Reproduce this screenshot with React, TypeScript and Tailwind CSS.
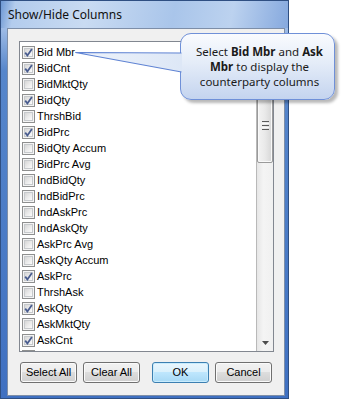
import React from "react";

const ITEMS: [string, boolean][] = [
  ["Bid Mbr", true],
  ["BidCnt", true],
  ["BidMktQty", false],
  ["BidQty", true],
  ["ThrshBid", false],
  ["BidPrc", true],
  ["BidQty Accum", false],
  ["BidPrc Avg", false],
  ["IndBidQty", false],
  ["IndBidPrc", false],
  ["IndAskPrc", false],
  ["IndAskQty", false],
  ["AskPrc Avg", false],
  ["AskQty Accum", false],
  ["AskPrc", true],
  ["ThrshAsk", false],
  ["AskQty", true],
  ["AskMktQty", false],
  ["AskCnt", true],
  ["", false],
];

function CheckBox({ checked }: { checked: boolean }) {
  return (
    <div className="relative w-[13px] h-[13px] shrink-0 border border-[#8e8f8f] bg-[#f4f4f4] p-[1px]">
      <div className="w-full h-full border border-[#c6c9cc] bg-[linear-gradient(135deg,#d6d6d6_0%,#eeeeee_60%,#fbfbfb_100%)]" />
      {checked && (
        <svg className="absolute left-0 top-0" width="11" height="11" viewBox="0 0 11 11">
          <path d="M2.2 5.6 L4.4 8.4 L8.9 1.9" fill="none" stroke="#4a5d8f" strokeWidth="1.8" strokeLinejoin="miter" />
        </svg>
      )}
    </div>
  );
}

const BTN =
  "block shrink-0 w-[57px] h-[21px] p-0 rounded-[3px] text-[11px] leading-[19px] text-black text-center whitespace-nowrap";

function WinButton({ label, primary, className = "" }: { label: string; primary?: boolean; className?: string }) {
  return (
    <button
      className={
        BTN +
        " " +
        (primary
          ? "border border-[#3c7fb1] bg-[linear-gradient(180deg,#eaf6fd_0%,#d9f0fc_50%,#bee6fd_50%,#a7d9f5_100%)] shadow-[inset_0_0_0_1px_#c9ecfd]"
          : "border border-[#707070] bg-[linear-gradient(180deg,#f2f2f2_0%,#ebebeb_50%,#dddddd_50%,#cfcfcf_100%)] shadow-[inset_0_0_0_1px_#fafafa]") +
        " " +
        className
      }
      style={{ fontFamily: '"Liberation Sans", Arial, sans-serif' }}
    >
      {label}
    </button>
  );
}

function ScrollBar() {
  return (
    <div className="w-[17px] h-full flex flex-col border-l border-[#b9b9b9] bg-[linear-gradient(90deg,#e6e6e6_0%,#f4f4f4_40%,#f0f0f0_100%)]">
      <div className="h-[17px] shrink-0" />
      <div className="h-[28px] shrink-0" />
      <div className="h-[76px] shrink-0 rounded-[2px] border border-[#9a9a9a] bg-[linear-gradient(90deg,#f3f3f3_0%,#e9e9e9_50%,#d6d6d6_100%)] shadow-[inset_0_0_0_1px_#f9f9f9] flex flex-col items-center justify-center gap-[1px]">
        <div className="w-[7px] h-[1px] bg-[#5a5a5a]" />
        <div className="w-[7px] h-[1px] bg-[#f8f8f8]" />
        <div className="w-[7px] h-[1px] bg-[#5a5a5a]" />
        <div className="w-[7px] h-[1px] bg-[#f8f8f8]" />
        <div className="w-[7px] h-[1px] bg-[#5a5a5a]" />
      </div>
      <div className="flex-1" />
      <div className="h-[17px] shrink-0 flex items-center justify-center">
        <svg width="7" height="4" viewBox="0 0 7 4">
          <path d="M0 0 H7 L3.5 4 Z" fill="#4d4d4d" />
        </svg>
      </div>
    </div>
  );
}

function Callout() {
  return (
    <>
      <div
        className="absolute left-[180px] top-[33px] w-[155px] h-[67px] rounded-[11px] border border-[#6f90d8] bg-[linear-gradient(180deg,#f9fbfe_0%,#e4ecf8_45%,#c4d4ef_100%)] shadow-[3px_3px_3px_rgba(0,0,0,0.28)] flex flex-col items-center justify-center text-[11.5px] leading-[15px] text-[#1a1a1a] pl-[4px]"
        style={{ fontFamily: '"Noto Sans", "Open Sans", sans-serif' }}
      >
        <div>
          Select <b>Bid Mbr</b> and <b>Ask</b>
        </div>
        <div>
          <b>Mbr</b> to display the
        </div>
        <div>counterparty columns</div>
      </div>
      <svg className="absolute left-0 top-0" width="200" height="90" viewBox="0 0 200 90">
        <defs>
          <linearGradient id="ptr" x1="0" y1="0" x2="1" y2="0">
            <stop offset="0" stopColor="#eef3fb" />
            <stop offset="1" stopColor="#dde7f6" />
          </linearGradient>
        </defs>
        <polygon points="75.5,52.5 182,53 182,72" fill="url(#ptr)" />
        <polyline points="181.5,53 75.5,52.5 181.5,72" fill="none" stroke="#5f83d3" strokeWidth="1.2" />
      </svg>
    </>
  );
}

export default function App() {
  return (
    <div className="relative w-[348px] h-[399px] bg-white overflow-hidden">
      <div className="w-[289px] h-[399px] flex flex-col border border-[#2f4f82] bg-[linear-gradient(180deg,#b5cdee_0px,#9dbbe6_28px,#5686cb_70px,#3f70c1_100%)]">
        <div className="h-[27px] shrink-0 flex items-center pl-[7px] bg-[linear-gradient(100deg,#6d98d4_0%,#b3cced_5%,#c9dbf2_30%,#a9c5ea_60%,#bcd2ef_80%,#86a9de_100%)]">
          <span
            className="text-[12px] text-[#111] mt-[1px]"
            style={{ fontFamily: '"Noto Sans", "Open Sans", sans-serif' }}
          >
            Show/Hide Columns
          </span>
        </div>
        <div className="flex-1 ml-[6px] mr-[3px] mb-[2px] border border-[#7d8ea8] bg-[#f0f0f0] pt-[12px] pl-[11px] pr-[10px] flex flex-col">
          <div className="h-[311px] shrink-0 border border-[#828790] bg-white flex overflow-hidden">
            <div
              className="flex-1 flex flex-col pt-[2px] pl-[2px] text-[11px] text-black overflow-hidden"
              style={{ fontFamily: '"Liberation Sans", Arial, sans-serif' }}
            >
              {ITEMS.map(([name, checked], i) => (
                <div key={i} className="h-[16px] shrink-0 flex items-center gap-[2px]">
                  <CheckBox checked={checked} />
                  {name && <span className="leading-[16px]">{name}</span>}
                </div>
              ))}
            </div>
            <ScrollBar />
          </div>
          <div className="flex items-start mt-[10px] pl-[1px]">
            <WinButton label="Select All" />
            <WinButton label="Clear All" className="ml-[6px]" />
            <WinButton label="OK" primary className="ml-[12px]" />
            <WinButton label="Cancel" className="ml-[6px]" />
          </div>
        </div>
      </div>
      <Callout />
    </div>
  );
}
